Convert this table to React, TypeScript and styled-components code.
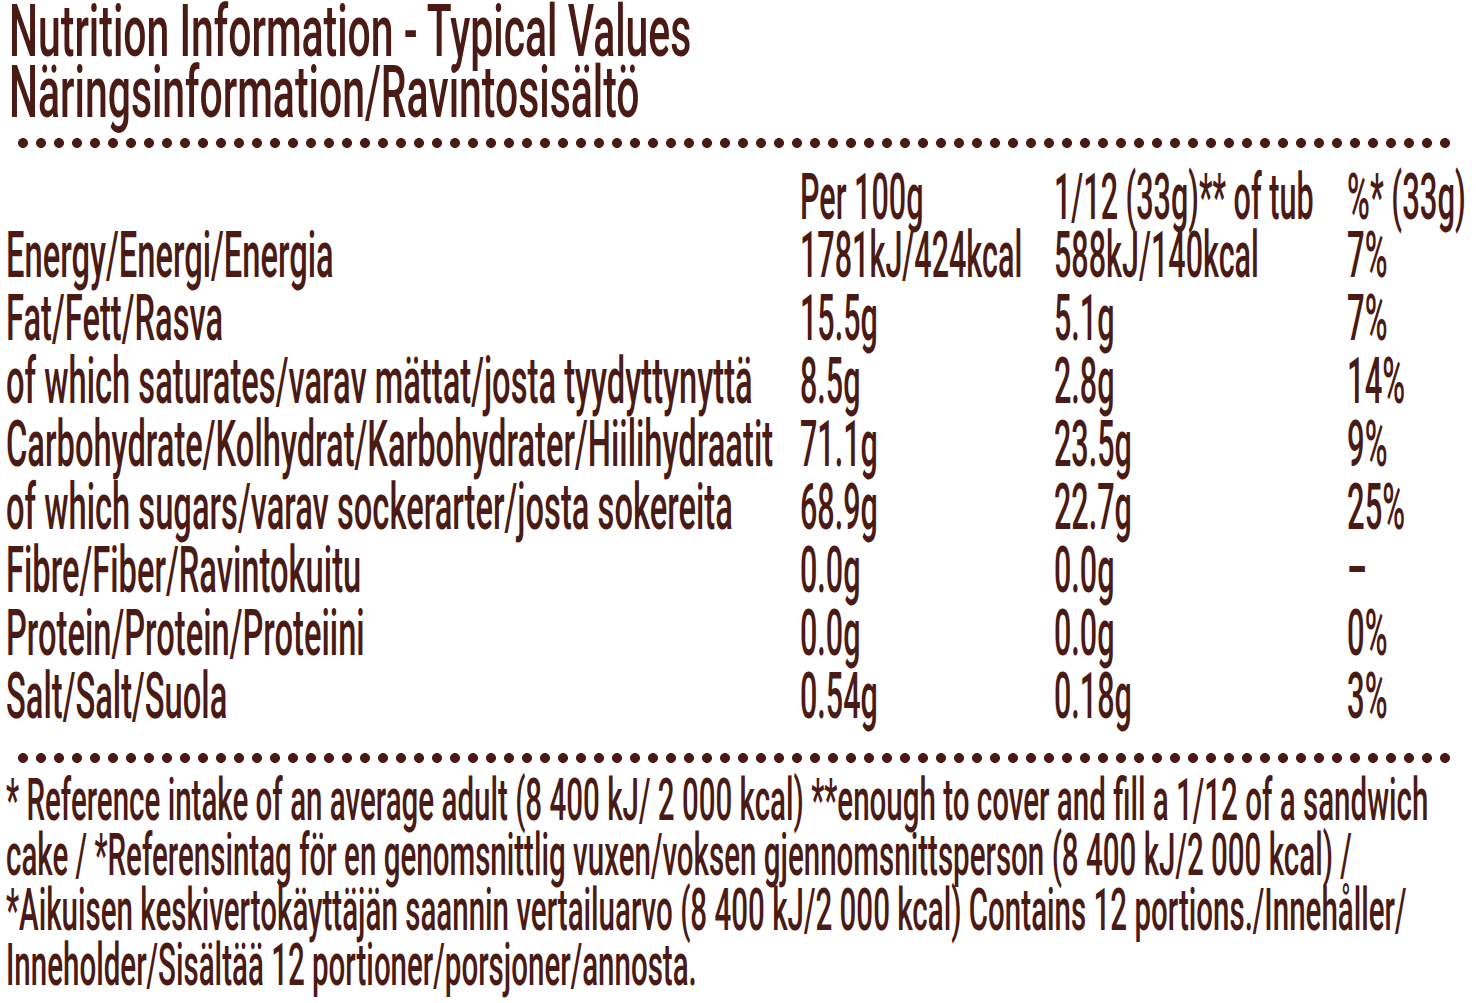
import React, { useLayoutEffect, useRef, useState } from "react";
import styled, { createGlobalStyle } from "styled-components";

const INK = "#4a1a15";

const GlobalStyle = createGlobalStyle`
  html, body {
    margin: 0;
    padding: 0;
    background: #ffffff;
  }
  body {
    font-family: Roboto, "Liberation Sans", Arial, sans-serif;
    color: ${INK};
  }
`;

const Page = styled.main`
  width: 1476px;
  height: 1003px;
  padding-top: 1px;
  box-sizing: border-box;
  display: flex;
  flex-direction: column;
`;

const SqueezeSpan = styled.span<{ $sx: number }>`
  display: inline-block;
  white-space: nowrap;
  transform: scaleX(${(p) => p.$sx});
  transform-origin: 0 50%;
`;

function Squeeze({ sx, children }: { sx: number; children: React.ReactNode }) {
  const ref = useRef<HTMLSpanElement>(null);
  const [mr, setMr] = useState(0);
  useLayoutEffect(() => {
    if (ref.current) {
      const w = ref.current.offsetWidth;
      setMr(-w * (1 - sx));
    }
  }, [sx, children]);
  return (
    <SqueezeSpan ref={ref} $sx={sx} style={{ marginRight: mr }}>
      {children}
    </SqueezeSpan>
  );
}

const TitleBlock = styled.header`
  padding-left: 9px;
  font-size: 72px;
  line-height: 61px;
  font-weight: 500;
`;

const TitleLine = styled.h1`
  margin: 0;
  font: inherit;
  height: 61px;
`;

const DotRule = styled.div<{ $top: number }>`
  margin-top: ${(p) => p.$top}px;
  margin-left: 14px;
  width: 1440px;
  height: 12px;
  flex: none;
  background-image: radial-gradient(circle at 9px 6px, ${INK} 0, ${INK} 4.6px, transparent 5.3px);
  background-size: 18px 12px;
  background-repeat: repeat-x;
`;

const Table = styled.section`
  margin-top: 17px;
  padding-left: 6px;
  display: grid;
  grid-template-columns: 794px 254px 293px 1fr;
  grid-auto-rows: 63px;
  grid-template-rows: 58px;
  font-size: 65px;
  line-height: 63px;
  font-weight: 500;
`;

const Cell = styled.div`
  white-space: nowrap;
`;

const Notes = styled.section`
  margin-top: 8px;
  padding-left: 6px;
  font-size: 60px;
  line-height: 55px;
  font-weight: 500;
`;

const NoteLine = styled.p`
  margin: 0;
  height: 55px;
`;

const TITLE_SX = 0.568;
const LABEL_SX = 0.503;
const VALUE_SX = 0.47;
const PCT_SX = 0.478;
const NOTE_SX = 0.492;

const rows: [string, string, string, string][] = [
  ["", "Per 100g", "1/12 (33g)** of tub", "%* (33g)"],
  ["Energy/Energi/Energia", "1781kJ/424kcal", "588kJ/140kcal", "7%"],
  ["Fat/Fett/Rasva", "15.5g", "5.1g", "7%"],
  ["of which saturates/varav mättat/josta tyydyttynyttä", "8.5g", "2.8g", "14%"],
  ["Carbohydrate/Kolhydrat/Karbohydrater/Hiilihydraatit", "71.1g", "23.5g", "9%"],
  ["of which sugars/varav sockerarter/josta sokereita", "68.9g", "22.7g", "25%"],
  ["Fibre/Fiber/Ravintokuitu", "0.0g", "0.0g", "–"],
  ["Protein/Protein/Proteiini", "0.0g", "0.0g", "0%"],
  ["Salt/Salt/Suola", "0.54g", "0.18g", "3%"],
];

const notes = [
  "* Reference intake of an average adult (8 400 kJ/ 2 000 kcal) **enough to cover and fill a 1/12 of a sandwich",
  "cake / *Referensintag för en genomsnittlig vuxen/voksen gjennomsnittsperson (8 400 kJ/2 000 kcal) /",
  "*Aikuisen keskivertokäyttäjän saannin vertailuarvo (8 400 kJ/2 000 kcal) Contains 12 portions./Innehåller/",
  "Inneholder/Sisältää 12 portioner/porsjoner/annosta.",
];

export default function App() {
  return (
    <>
      <GlobalStyle />
      <Page>
        <TitleBlock>
          <TitleLine>
            <Squeeze sx={TITLE_SX}>Nutrition Information - Typical Values</Squeeze>
          </TitleLine>
          <TitleLine>
            <Squeeze sx={TITLE_SX}>Näringsinformation/Ravintosisältö</Squeeze>
          </TitleLine>
        </TitleBlock>
        <DotRule $top={14} />
        <Table>
          {rows.map((r, i) => (
            <React.Fragment key={i}>
              <Cell>{r[0] && <Squeeze sx={LABEL_SX}>{r[0]}</Squeeze>}</Cell>
              <Cell>
                <Squeeze sx={VALUE_SX}>{r[1]}</Squeeze>
              </Cell>
              <Cell>
                <Squeeze sx={VALUE_SX}>{r[2]}</Squeeze>
              </Cell>
              <Cell>
                <Squeeze sx={PCT_SX}>{r[3]}</Squeeze>
              </Cell>
            </React.Fragment>
          ))}
        </Table>
        <DotRule $top={24} />
        <Notes>
          {notes.map((n, i) => (
            <NoteLine key={i}>
              <Squeeze sx={NOTE_SX}>{n}</Squeeze>
            </NoteLine>
          ))}
        </Notes>
      </Page>
    </>
  );
}
